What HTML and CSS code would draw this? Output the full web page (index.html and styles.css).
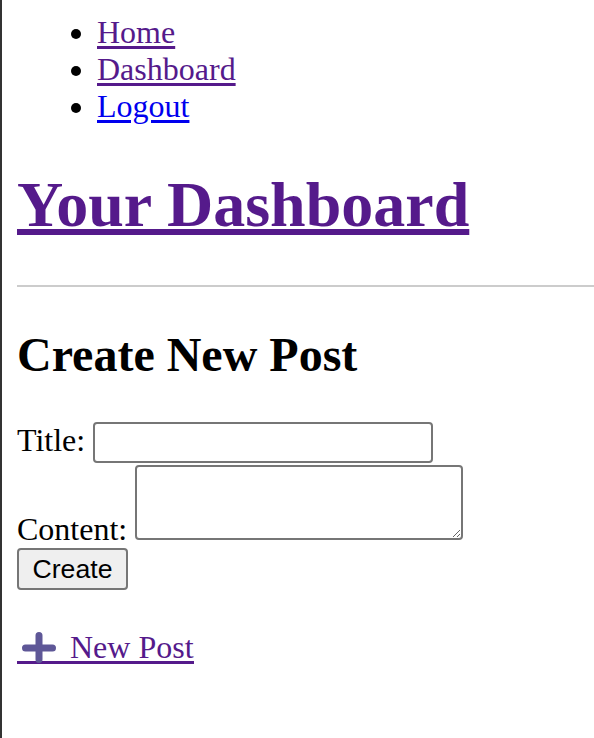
FILE: index.html
```html
<!DOCTYPE html>
<html lang="en">
<head>
<meta charset="utf-8">
<title>Your Dashboard</title>
<link rel="stylesheet" href="styles.css">
</head>
<body>
<nav class="nav">
  <ul class="nav-list">
    <li><a class="visited" href="#">Home</a></li>
    <li><a class="visited" href="#">Dashboard</a></li>
    <li><a class="fresh" href="#">Logout</a></li>
  </ul>
</nav>
<h1 class="page-title"><a class="visited" href="#">Your Dashboard</a></h1>
<hr class="divider">
<h2 class="section-title">Create New Post</h2>
<form class="post-form">
  <label class="field-label">Title:</label> <input class="title-input" type="text"><br>
  <label class="field-label">Content:</label> <textarea class="content-input"></textarea><br>
  <button class="create-btn" type="button">Create</button>
</form>
<p class="new-post-row">
  <a class="new-post" href="#"><svg class="plus-icon" width="45" height="24" viewBox="0 0 45 24"><path d="M22 1.5V25.5M8.5 14H35.5" stroke="#5e5797" stroke-width="7" stroke-linecap="round" fill="none"/></svg> New Post</a>
</p>
</body>
</html>
```

FILE: styles.css
```css
html {
  border-left: 2px solid #333;
  min-height: 100%;
  box-sizing: border-box;
}
body {
  margin: 0 0 0 15px;
  font-family: "Liberation Serif", "Times New Roman", serif;
  font-size: 32px;
  color: #000;
}
.visited {
  color: #551a8b;
  text-decoration-thickness: 3px;
  text-underline-offset: 3px;
}
.fresh {
  color: #0000ee;
  text-decoration-thickness: 3px;
  text-underline-offset: 3px;
}
.nav-list {
  margin: 14px 0 32px;
  padding-left: 80px;
}
.page-title {
  font-size: 64px;
  margin: 43px 0;
}
.page-title a {
  text-decoration-thickness: 6px;
  text-underline-offset: 3px;
}
.divider {
  border: 0;
  border-top: 2px solid #cccccc;
  margin: 0 0 16px;
}
.section-title {
  font-size: 48px;
  margin: 40px 0;
}
.post-form {
  margin: 0;
}
.title-input {
  box-sizing: border-box;
  width: 340px;
  height: 41px;
  font: 26.67px Arial, "Liberation Sans", sans-serif;
  border: 2px solid #767676;
  border-radius: 4px;
  padding: 2px 4px;
}
.content-input {
  box-sizing: border-box;
  width: 328px;
  height: 75px;
  border: 2px solid #767676;
  border-radius: 4px;
  font: 26.67px "Liberation Mono", monospace;
  padding: 4px;
  margin: 2px 0 0;
  vertical-align: baseline;
}
.create-btn {
  box-sizing: border-box;
  width: 111px;
  height: 42px;
  margin: 0;
  padding: 2px 12px;
  font: 26.67px "Liberation Sans", Arial, sans-serif;
  color: #000;
  background: #efefef;
  border: 2px solid #767676;
  border-radius: 4px;
}
.new-post-row {
  margin: 39px 0 32px;
}
.new-post {
  display: inline-block;
  line-height: 28px;
  color: #551a8b;
  text-decoration: none;
  border-bottom: 3px solid #551a8b;
}
.plus-icon {
  vertical-align: baseline;
  overflow: visible;
}
```
